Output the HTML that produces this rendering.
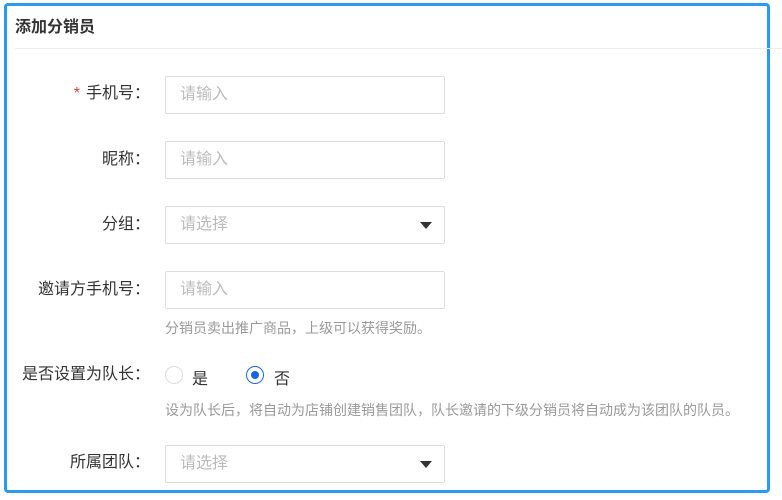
<!DOCTYPE html>
<html><head><meta charset="utf-8"><style>
body{margin:0;width:782px;height:500px;background:#fff;font-family:"Liberation Sans","Noto Sans CJK SC",sans-serif;position:relative;overflow:hidden}
.frame{position:absolute;left:4px;top:3px;width:760px;height:484px;border:3px solid #2b9af3;border-radius:4px}
.title{position:absolute;left:15px;top:13px;font-size:16px;font-weight:bold;color:#333}
.hr{position:absolute;left:15px;right:0;top:48px;height:1px;background:#eee}
.lab{position:absolute;right:632px;font-size:16px;color:#333;white-space:nowrap;line-height:20px}
.star{color:#e4393c;margin-right:6px}
.inp{position:absolute;left:165px;border:1px solid #ddd;border-radius:2px;box-sizing:border-box;width:280px;height:38px;font-size:16px;color:#bbb;line-height:36px;padding-left:14px}
.arrow{position:absolute;right:12px;top:15px;width:0;height:0;border-left:6px solid transparent;border-right:6px solid transparent;border-top:7px solid #333}
.help{position:absolute;left:165px;font-size:14px;color:#999;white-space:nowrap}
.radio{position:absolute;top:366px;width:18px;height:18px;border:1px solid #ddd;border-radius:50%;box-sizing:border-box}
.radio.on{border-color:#1a66d8}
.radio.on::after{content:"";position:absolute;left:4px;top:4px;width:8px;height:8px;border-radius:50%;background:#1a66d8}
.rt{position:absolute;top:365px;font-size:16px;color:#333}
</style></head><body>
<div class="frame"></div>
<div class="title">添加分销员</div>
<div class="hr"></div>
<div class="lab" style="top:84px"><span class="star">*</span>手机号：</div>
<div class="inp" style="top:76px">请输入</div>
<div class="lab" style="top:150px">昵称：</div>
<div class="inp" style="top:141px">请输入</div>
<div class="lab" style="top:215px">分组：</div>
<div class="inp" style="top:206px">请选择<span class="arrow"></span></div>
<div class="lab" style="top:280px">邀请方手机号：</div>
<div class="inp" style="top:271px">请输入</div>
<div class="help" style="top:318px">分销员卖出推广商品，上级可以获得奖励。</div>
<div class="lab" style="top:365px">是否设置为队长：</div>
<div class="radio" style="left:165px"></div><div class="rt" style="left:192px">是</div>
<div class="radio on" style="left:246px"></div><div class="rt" style="left:274px">否</div>
<div class="help" style="top:400px">设为队长后，将自动为店铺创建销售团队，队长邀请的下级分销员将自动成为该团队的队员。</div>
<div class="lab" style="top:453px">所属团队：</div>
<div class="inp" style="top:445px">请选择<span class="arrow"></span></div>
</body></html>
